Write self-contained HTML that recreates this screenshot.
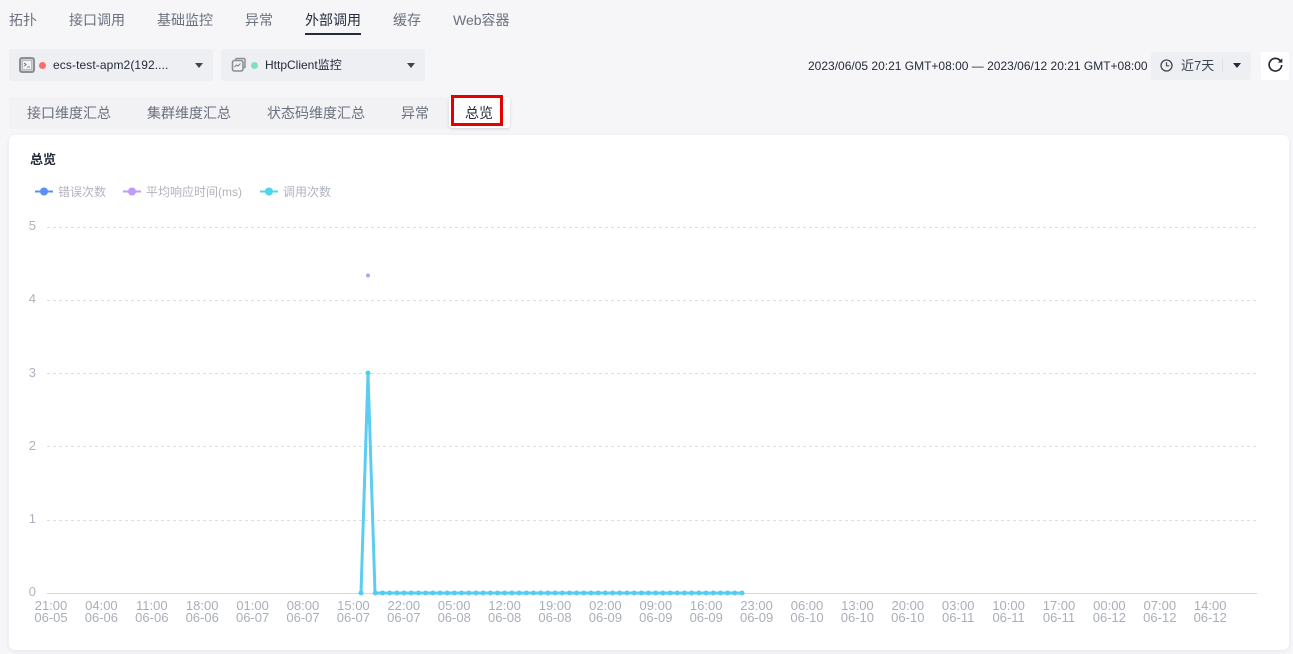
<!DOCTYPE html>
<html lang="zh"><head><meta charset="utf-8"><title>总览</title>
<style>
html,body{margin:0;padding:0}
body{width:1293px;height:654px;overflow:hidden;background:#f6f6f9;position:relative;font-family:"Liberation Sans","Noto Sans CJK SC",sans-serif;color:#252b3a}
.a{position:absolute;white-space:nowrap}
.t{top:10px;font-size:14px;line-height:20px;color:#6a707d}
.s{top:104px;font-size:14px;line-height:18px;color:#6a707d}
.box{background:#eeeff3;border-radius:3px}
.tri{position:absolute;width:0;height:0;border-left:4.5px solid transparent;border-right:4.5px solid transparent;border-top:5.5px solid #3f4552}
.dot{position:absolute;width:7px;height:7px;border-radius:50%}
</style></head><body>
<div class="a t" style="left:9px">拓扑</div>
<div class="a t" style="left:69px">接口调用</div>
<div class="a t" style="left:157px">基础监控</div>
<div class="a t" style="left:245px">异常</div>
<div class="a t" style="left:305px;color:#252b3a">外部调用</div>
<div class="a" style="left:305px;top:33px;width:56px;height:2px;background:#252b3a"></div>
<div class="a t" style="left:393px">缓存</div>
<div class="a t" style="left:453px">Web容器</div>

<div class="a box" style="left:9px;top:49px;width:204px;height:32px"></div>
<svg class="a" style="left:19px;top:57px" width="16" height="16" viewBox="0 0 16 16"><rect x="1" y="1" width="14" height="14" rx="2" fill="#d0d1d6" stroke="#8b8e96" stroke-width="2"/><rect x="3.500" y="3.500" width="9" height="9" fill="#f3f3f5" stroke="#a8aab0" stroke-width=".7"/><path d="M5 6l2.200 1.500-2.200 1.500M8 10h3" fill="none" stroke="#666" stroke-width=".8"/></svg>
<div class="dot" style="left:38.500px;top:61.500px;background:#f66f6a"></div>
<div class="a" style="left:53px;top:57px;font-size:12px;line-height:16px;letter-spacing:.1px">ecs-test-apm2(192....</div>
<div class="tri" style="left:195px;top:63px"></div>

<div class="a box" style="left:221px;top:49px;width:204px;height:32px"></div>
<svg class="a" style="left:231px;top:57px" width="16" height="16" viewBox="0 0 16 16"><path d="M4.500 2.800Q4.700 1.500 6 1.500h6.500Q14 1.500 14 3v6.500q0 1.200-1.200 1.400" fill="none" stroke="#8b8e96" stroke-width="1.500"/><rect x="1.500" y="3.500" width="10.500" height="10.500" rx="2" fill="#f0f0f3" stroke="#8b8e96" stroke-width="1.600"/><path d="M3.500 10l2-2 1.500 1 2.500-2.500" fill="none" stroke="#777" stroke-width=".9"/></svg>
<div class="dot" style="left:250.500px;top:61.500px;background:#7fe0c0"></div>
<div class="a" style="left:265px;top:57px;font-size:12px;line-height:16px">HttpClient监控</div>
<div class="tri" style="left:407px;top:63px"></div>

<div class="a" style="left:808px;top:58px;font-size:12px;line-height:16px">2023/06/05 20:21 GMT+08:00 — 2023/06/12 20:21 GMT+08:00</div>
<div class="a box" style="left:1151px;top:52px;width:100px;height:28px"></div>
<svg class="a" style="left:1160px;top:59px" width="13" height="13" viewBox="0 0 13 13"><circle cx="6.500" cy="6.500" r="5.500" fill="none" stroke="#444a56" stroke-width="1.300"/><path d="M6.500 3.300v3.500h2.700" fill="none" stroke="#444a56" stroke-width="1.200"/></svg>
<div class="a" style="left:1181px;top:57px;font-size:13px;line-height:18px;color:#3a4150">近7天</div>
<div class="a" style="left:1222px;top:58px;width:1px;height:15px;background:#dfe1e6"></div>
<div class="tri" style="left:1233px;top:63px;border-top-color:#252b3a"></div>
<div class="a" style="left:1261px;top:52px;width:28px;height:28px;background:#fff;border-radius:2px"></div>
<svg class="a" style="left:1267px;top:57px" width="17" height="16" viewBox="0 0 17 16"><path d="M13.500 4A6.300 6.300 0 1 0 14.700 8" fill="none" stroke="#252b3a" stroke-width="1.700"/><path d="M15.300 1.200v4.400h-4.400z" fill="#252b3a"/></svg>

<div class="a" style="left:9px;top:97px;width:501px;height:32px;background:#f2f2f4;border-radius:3px"></div>
<div class="a s" style="left:27px">接口维度汇总</div>
<div class="a s" style="left:147px">集群维度汇总</div>
<div class="a s" style="left:267px">状态码维度汇总</div>
<div class="a s" style="left:401px">异常</div>
<div class="a" style="left:449px;top:97px;width:61px;height:31px;background:#fff;border-radius:3px;box-shadow:0 1px 3px rgba(0,0,0,.12)"></div>
<div class="a s" style="left:465px;color:#252b3a">总览</div>
<div class="a" style="left:451px;top:95px;width:46px;height:25px;border:3px solid #e60000"></div>

<div class="a" style="left:9px;top:135px;width:1280px;height:515px;background:#fff;border-radius:6px;box-shadow:0 1px 4px rgba(30,40,70,.08)"></div>
<div class="a" style="left:30px;top:151px;font-size:13px;line-height:17px;font-weight:bold;color:#252b3a">总览</div>

<svg class="a" style="left:0;top:0" width="1293" height="654" viewBox="0 0 1293 654">
<g stroke="#dcdee2" stroke-width="1" stroke-dasharray="3 3">
<path d="M47 227.500H1257M47 300.500H1257M47 373.500H1257M47 446.500H1257M47 520.500H1257"/>
</g>
<path d="M47 593.500H1257" stroke="#d5d7dc"/>
<g fill="#aeb3bd" font-family="'Liberation Sans',sans-serif" font-size="13" text-anchor="end">
<text x="36" y="230">5</text><text x="36" y="303">4</text><text x="36" y="377">3</text><text x="36" y="450">2</text><text x="36" y="523">1</text><text x="36" y="596">0</text>
</g>
<g stroke-width="2"><path d="M35 191.500h18" stroke="#5b8ff9"/><path d="M123 191.500h18" stroke="#c19bfb"/><path d="M260 191.500h18" stroke="#52d4ee"/></g>
<circle cx="44" cy="191.500" r="4" fill="#5b8ff9"/><circle cx="132" cy="191.500" r="4" fill="#c19bfb"/><circle cx="269" cy="191.500" r="4" fill="#52d4ee"/>
<g fill="#b0b4bd" font-family="'Liberation Sans','Noto Sans CJK SC',sans-serif" font-size="12">
<text x="58" y="196">错误次数</text><text x="146" y="196">平均响应时间(ms)</text><text x="283" y="196">调用次数</text>
</g>
<circle cx="368" cy="275.500" r="2" fill="#c19bfb"/>
<path d="M361 593L368 373L375 593H742" fill="none" stroke="#5ccdf0" stroke-width="3"/>
<path d="M375.300 593H744" fill="none" stroke="#52cdf0" stroke-width="5" stroke-linecap="round" stroke-dasharray="0 7.190"/>
<circle cx="361" cy="593" r="2.500" fill="#52cdf0"/><circle cx="368" cy="373" r="2.500" fill="#52cdf0"/>
<g fill="#a9aeb8" font-family="'Liberation Sans',sans-serif" font-size="13" text-anchor="middle">
<text x="51" y="610">21:00</text><text x="51" y="622">06-05</text>
<text x="101.400" y="610">04:00</text><text x="101.400" y="622">06-06</text>
<text x="151.800" y="610">11:00</text><text x="151.800" y="622">06-06</text>
<text x="202.200" y="610">18:00</text><text x="202.200" y="622">06-06</text>
<text x="252.600" y="610">01:00</text><text x="252.600" y="622">06-07</text>
<text x="303" y="610">08:00</text><text x="303" y="622">06-07</text>
<text x="353.400" y="610">15:00</text><text x="353.400" y="622">06-07</text>
<text x="403.800" y="610">22:00</text><text x="403.800" y="622">06-07</text>
<text x="454.200" y="610">05:00</text><text x="454.200" y="622">06-08</text>
<text x="504.600" y="610">12:00</text><text x="504.600" y="622">06-08</text>
<text x="555" y="610">19:00</text><text x="555" y="622">06-08</text>
<text x="605.400" y="610">02:00</text><text x="605.400" y="622">06-09</text>
<text x="655.800" y="610">09:00</text><text x="655.800" y="622">06-09</text>
<text x="706.200" y="610">16:00</text><text x="706.200" y="622">06-09</text>
<text x="756.600" y="610">23:00</text><text x="756.600" y="622">06-09</text>
<text x="807" y="610">06:00</text><text x="807" y="622">06-10</text>
<text x="857.400" y="610">13:00</text><text x="857.400" y="622">06-10</text>
<text x="907.800" y="610">20:00</text><text x="907.800" y="622">06-10</text>
<text x="958.200" y="610">03:00</text><text x="958.200" y="622">06-11</text>
<text x="1008.600" y="610">10:00</text><text x="1008.600" y="622">06-11</text>
<text x="1059" y="610">17:00</text><text x="1059" y="622">06-11</text>
<text x="1109.400" y="610">00:00</text><text x="1109.400" y="622">06-12</text>
<text x="1159.800" y="610">07:00</text><text x="1159.800" y="622">06-12</text>
<text x="1210.200" y="610">14:00</text><text x="1210.200" y="622">06-12</text>
</g>
</svg>
</body></html>
